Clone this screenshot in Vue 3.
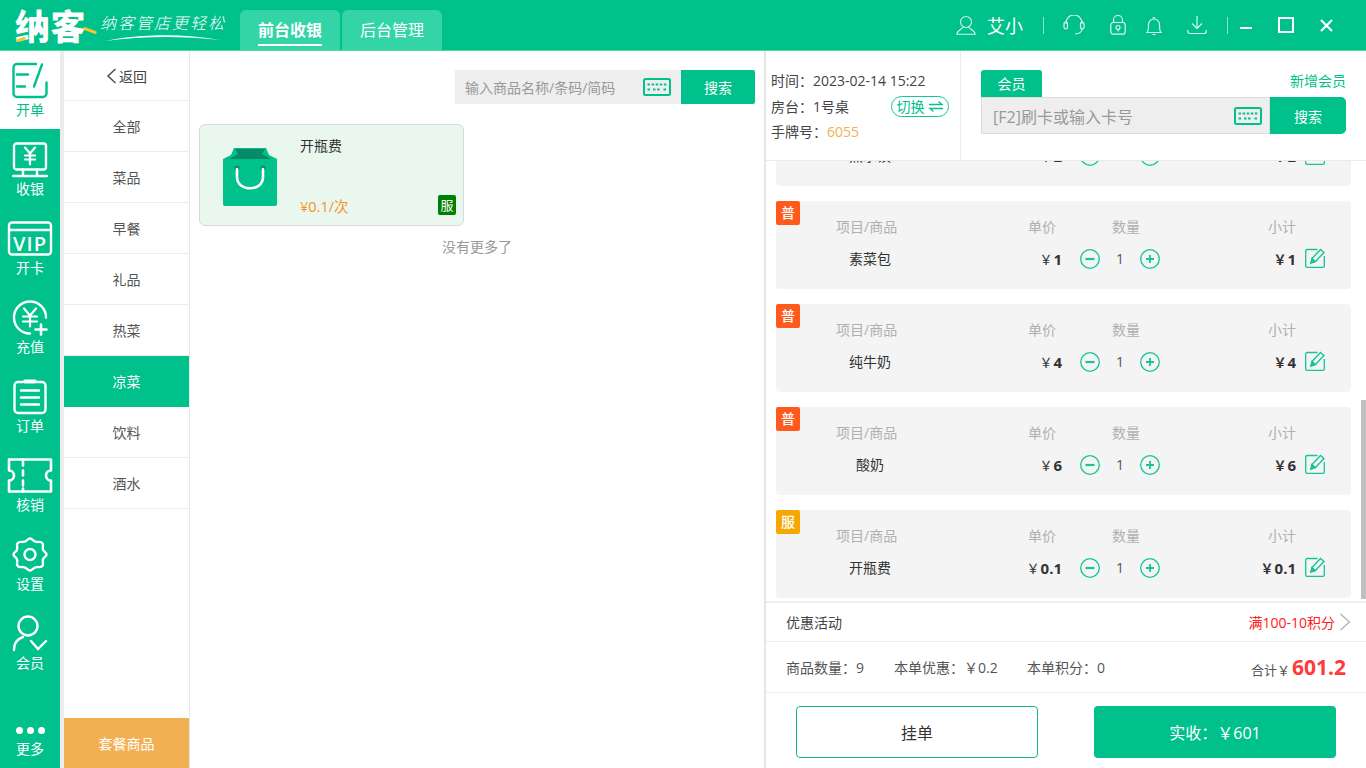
<script setup>
const cats = ['全部', '菜品', '早餐', '礼品', '热菜', '凉菜', '饮料', '酒水']
const cart = [
  { tag: '普', name: '蒸水饺', price: '2', kind: 'normal' },
  { tag: '普', name: '素菜包', price: '1', kind: 'normal' },
  { tag: '普', name: '纯牛奶', price: '4', kind: 'normal' },
  { tag: '普', name: '酸奶', price: '6', kind: 'normal' },
  { tag: '服', name: '开瓶费', price: '0.1', kind: 'service' }
]
</script>

<template>
  <div class="app">
    <header class="top">
      <div class="logo"><span class="logo-name">纳客</span><i class="acc a1"></i><i class="acc a2"></i></div>
      <div class="slogan">
        <span>纳客管店更轻松</span>
        <svg width="120" height="10" viewBox="0 0 120 10"><path d="M2 8C35 1 80 0 117 7C80 3 40 3 2 8Z" fill="#fff"/></svg>
      </div>
      <nav class="tabs">
        <div class="tab on"><span>前台收银</span></div>
        <div class="tab"><span>后台管理</span></div>
      </nav>
      <div class="tools">
        <svg class="t-user" width="20" height="20" viewBox="0 0 20 20" fill="none" stroke="#d6f7ea" stroke-width="1.1"><circle cx="10" cy="7" r="5.5"/><path d="M7.5 11.5C7 14 1 15 .8 19.3H19.2C19 15 13 14 12.5 11.5"/></svg>
        <span class="uname">艾小</span>
        <i class="sep s1"></i>
        <svg class="t-head" width="22" height="20" viewBox="0 0 22 20" fill="none" stroke="#d6f7ea" stroke-width="1.2"><path d="M3 9V8a8 8 0 0 1 16 0v1"/><rect x="1" y="7" width="3.5" height="7" rx="1.7"/><rect x="17.5" y="7" width="3.5" height="7" rx="1.7"/><path d="M19 14c0 3-3 5-7 5"/></svg>
        <svg class="t-lock" width="16" height="20" viewBox="0 0 16 20" fill="none" stroke="#d6f7ea" stroke-width="1.2"><rect x=".8" y="7.5" width="14.4" height="11.7" rx="2.5"/><path d="M3.5 7.5V5a4.5 4.5 0 0 1 9 0v2.5"/><circle cx="8" cy="12.5" r="2"/><path d="M8 14.5v2"/></svg>
        <svg class="t-bell" width="16" height="21" viewBox="0 0 16 21" fill="none" stroke="#d6f7ea" stroke-width="1.2"><path d="M1 17.5c1.5-1 1.5-3 1.5-8a5.5 5.5 0 0 1 11 0c0 5 0 7 1.5 8Z"/><path d="M6.5 19.5h3M7 3.5a1 1 0 0 1 2 0"/></svg>
        <svg class="t-down" width="20" height="20" viewBox="0 0 20 20" fill="none" stroke="#d6f7ea" stroke-width="1.2"><path d="M10 1v12M5 8.5l5 5 5-5"/><path d="M.8 15v1.5a2 2 0 0 0 2 2h14.4a2 2 0 0 0 2-2V15"/></svg>
        <i class="sep s2"></i>
        <i class="w-min"></i>
        <i class="w-max"></i>
        <svg class="w-close" width="13" height="13" viewBox="0 0 13 13" stroke="#fff" stroke-width="2.2"><path d="M1 1l11 11M12 1L1 12"/></svg>
      </div>
    </header>

    <div class="body">
      <aside class="side">
        <div class="nav on">
          <svg width="36" height="36" viewBox="0 0 36 36" fill="none" stroke="#00c18b" stroke-width="2.4" stroke-linecap="round"><path d="M24 1.5H5A3.5 3.5 0 0 0 1.5 5v26A3.5 3.5 0 0 0 5 34.5h26a3.5 3.5 0 0 0 3.5-3.5V20"/><path d="M30 2l-8 22M5 12h11M5 24h8"/></svg>
          <span>开单</span>
        </div>
        <div class="nav">
          <svg width="36" height="36" viewBox="0 0 36 36" fill="none" stroke="#fff" stroke-width="2.4" stroke-linecap="round"><rect x="2" y="2" width="32" height="26" rx="2.5"/><path d="M11 28v6M25 28v6M1 34.5h34"/><path d="M13 6l5 6 5-6M13 14h10M13 18h10M18 12v11" stroke-width="2.2"/></svg>
          <span>收银</span>
        </div>
        <div class="nav">
          <svg width="46" height="36" viewBox="0 0 46 36" fill="none" stroke="#fff" stroke-width="2.4"><rect x="2" y="2" width="42" height="32" rx="3"/><path d="M2 9.5h42"/><text x="23" y="30" text-anchor="middle" font-family="Open Sans, sans-serif" font-size="20" font-weight="600" fill="#fff" stroke="none" letter-spacing="1">VIP</text></svg>
          <span>开卡</span>
        </div>
        <div class="nav">
          <svg width="38" height="36" viewBox="0 0 38 36" fill="none" stroke="#fff" stroke-width="2.4" stroke-linecap="round"><path d="M19 34A16 16 0 1 1 35 18"/><path d="M13 9l6 7 6-7M12 17h14M12 22h14M19 16v11" stroke-width="2.2"/><path d="M30 25v10M24.5 30h11" stroke-width="2.6"/></svg>
          <span>充值</span>
        </div>
        <div class="nav">
          <svg width="36" height="36" viewBox="0 0 36 36" fill="none" stroke="#fff" stroke-width="2.4" stroke-linecap="round"><path d="M11 3.5H6A3.5 3.5 0 0 0 2.5 7v24A3.5 3.5 0 0 0 6 34.5h24a3.5 3.5 0 0 0 3.5-3.5V7A3.5 3.5 0 0 0 30 3.5h-5"/><path d="M13 3h10" stroke-width="4"/><path d="M9 12h18M9 19h18M9 26h18"/></svg>
          <span>订单</span>
        </div>
        <div class="nav">
          <svg width="46" height="36" viewBox="0 0 46 36" fill="none" stroke="#fff" stroke-width="2.6" stroke-linecap="round" stroke-linejoin="round"><path d="M2 2h42v11a5 5 0 0 0 0 10v11H2V23a5 5 0 0 0 0-10Z"/><path d="M16 2v6M16 13v5M16 23v5M16 31v3"/></svg>
          <span>核销</span>
        </div>
        <div class="nav">
          <svg width="36" height="36" viewBox="0 0 36 36" fill="none" stroke="#fff" stroke-width="2.4"><path d="M18 2c2.5 0 3 2.5 5.500 3.200 3 .8 5-.8 6.800 1.300 1.800 2-.2 4 .7 6.700.8 2.500 3.500 2.600 3.500 4.800s-2.700 2.300-3.500 4.800c-.9 2.700 1.100 4.700-.7 6.700-1.800 2.100-3.800.5-6.800 1.300C21 31.500 20.500 34 18 34s-3-2.500-5.500-3.200c-3-.8-5 .8-6.800-1.300-1.800-2 .2-4-.7-6.700C4.200 20.300 1.500 20.200 1.500 18s2.700-2.300 3.500-4.800c.9-2.700-1.100-4.700.7-6.700 1.800-2.100 3.800-.5 6.800-1.300C15 4.500 15.500 2 18 2Z"/><circle cx="18" cy="18" r="5.5"/></svg>
          <span>设置</span>
        </div>
        <div class="nav">
          <svg width="36" height="37" viewBox="0 0 36 37" fill="none" stroke="#fff" stroke-width="2.4" stroke-linecap="round"><circle cx="16" cy="11" r="9.5"/><path d="M2 35c0-7 3-11 9-13"/><path d="M19 26l7 8 8-8"/></svg>
          <span>会员</span>
        </div>
        <div class="nav more">
          <div class="dots"><i></i><i></i><i></i></div>
          <span>更多</span>
        </div>
      </aside>

      <aside class="cats">
        <div class="cat back">
          <svg width="11" height="16" viewBox="0 0 11 16" fill="none" stroke="#555" stroke-width="1.6"><path d="M9.5 1L2 8l7.5 7"/></svg>
          <span>返回</span>
        </div>
        <div v-for="c in cats" :key="c" class="cat" :class="{ on: c === '凉菜' }">{{ c }}</div>
        <div class="combo">套餐商品</div>
      </aside>

      <main class="goods">
        <div class="search">
          <div class="s-input">
            <span>输入商品名称/条码/简码</span>
            <svg width="28" height="18" viewBox="0 0 28 18" fill="none" stroke="#00c18b"><rect x="1" y="1" width="26" height="16" rx="1.5" stroke-width="2"/><path d="M4.5 6.5h19M4.5 11.5h3M10 11.5h8M20.5 11.5h3" stroke-width="2" stroke-dasharray="2.5 1.6"/></svg>
          </div>
          <button class="s-btn">搜索</button>
        </div>
        <div class="card">
          <svg class="bag" width="54" height="58" viewBox="0 0 54 58"><path d="M11 0h32l3 7 8 4v45a2 2 0 0 1-2 2H2a2 2 0 0 1-2-2V11l8-4Z" fill="#00c18b"/><path d="M12 1h30l-3 5 9 5H6l9-5Z" fill="#078a68"/><circle cx="14" cy="20" r="2.5" fill="#078a68"/><circle cx="40" cy="20" r="2.5" fill="#078a68"/><path d="M14 21v8c0 15 26 15 26 0v-8" fill="none" stroke="#fff" stroke-width="2.6" stroke-linecap="round"/></svg>
          <div class="c-text">
            <div class="c-name">开瓶费</div>
            <div class="c-price">¥0.1/次</div>
          </div>
          <span class="c-tag">服</span>
        </div>
        <div class="nomore">没有更多了</div>
      </main>

      <section class="order">
        <div class="o-top">
          <div class="info">
            <div class="line">时间：2023-02-14 15:22</div>
            <div class="line between">
              <span>房台：1号桌</span>
              <span class="pill">切换
                <svg width="16" height="11" viewBox="0 0 16 11" fill="none" stroke="#00c18b" stroke-width="1.3"><path d="M1 3.5h13L10.5 .5M15 7.5H2l3.5 3"/></svg>
              </span>
            </div>
            <div class="line">手牌号：<em>6055</em></div>
          </div>
          <div class="member">
            <div class="m-head">
              <span class="m-tab">会员</span>
              <span class="m-add">新增会员</span>
            </div>
            <div class="m-row">
              <div class="m-input">
                <span>[F2]刷卡或输入卡号</span>
                <svg width="28" height="18" viewBox="0 0 28 18" fill="none" stroke="#00c18b"><rect x="1" y="1" width="26" height="16" rx="1.5" stroke-width="2"/><path d="M4.5 6.5h19M4.5 11.5h3M10 11.5h8M20.5 11.5h3" stroke-width="2" stroke-dasharray="2.5 1.6"/></svg>
              </div>
              <button class="m-btn">搜索</button>
            </div>
          </div>
        </div>

        <div class="list">
          <div v-for="it in cart" :key="it.name" class="item">
            <span class="badge" :class="it.kind">{{ it.tag }}</span>
            <div class="grid head">
              <span class="g-name">项目/商品</span>
              <span class="g-price">单价</span>
              <span class="g-qty">数量</span>
              <span class="g-sub">小计</span>
            </div>
            <div class="grid row">
              <span class="r-name">{{ it.name }}</span>
              <span class="r-price"><small>￥</small><b>{{ it.price }}</b></span>
              <span class="r-qty">
                <svg width="20" height="20" viewBox="0 0 20 20" fill="none" stroke="#14c596"><circle cx="10" cy="10" r="9.3" stroke-width="1.3"/><path d="M5.5 10h9" stroke-width="2.2"/></svg>
                <span class="num">1</span>
                <svg width="20" height="20" viewBox="0 0 20 20" fill="none" stroke="#14c596"><circle cx="10" cy="10" r="9.3" stroke-width="1.3"/><path d="M6 10h8M10 6v8" stroke-width="1.8"/></svg>
              </span>
              <span class="r-sub"><b class="yen">￥</b><b>{{ it.price }}</b></span>
              <svg class="edit" width="20" height="20" viewBox="0 0 20 20" fill="none" stroke="#14c596" stroke-width="1.3"><path d="M12.5 1.5H2A1.3 1.3 0 0 0 .7 2.8V18A1.3 1.3 0 0 0 2 19.3h16a1.3 1.3 0 0 0 1.3-1.3V8"/><path d="M6 15l1-4.5L15.5 1.5l3.5 3-8.5 9Z" stroke-width="1.4"/><path d="M6 15l1-4.5 3.5 3Z" fill="#14c596"/></svg>
            </div>
          </div>
          <i class="bar"></i>
        </div>

        <div class="o-bottom">
          <div class="promo">
            <span>优惠活动</span>
            <span class="p-val">满100-10积分
              <svg width="12" height="18" viewBox="0 0 12 18" fill="none" stroke="#aaa" stroke-width="1.1"><path d="M1.5 1l9 8-9 8"/></svg>
            </span>
          </div>
          <div class="stats">
            <span class="st1">商品数量：9</span>
            <span class="st2">本单优惠：￥0.2</span>
            <span class="st3">本单积分：0</span>
            <span class="total"><small>合计￥</small><b>601.2</b></span>
          </div>
          <div class="actions">
            <button class="hold">挂单</button>
            <button class="pay">实收：￥601</button>
          </div>
        </div>
      </section>
    </div>
  </div>
</template>

<style>
html, body { margin: 0; overflow: hidden; background: #fff; }
</style>

<style scoped>
.app {
  width: 1366px; height: 768px; overflow: hidden; display: flex; flex-direction: column;
  font-family: "Open Sans", "Noto Sans CJK SC", sans-serif; font-size: 14px; color: #333; background: #fff;
}
button { font-family: inherit; border: 0; padding: 0; cursor: pointer; }
i { display: block; font-style: normal; }

.top { height: 50px; flex: none; display: flex; align-items: flex-end; background: #00c18b; border-bottom: 1px solid #4fdd94; }
.logo { position: relative; width: 85px; margin-left: 15px; height: 50px; flex: none; }
.logo-name { display: block; font-size: 35px; line-height: 54px; font-weight: 900; color: #fff; white-space: nowrap; letter-spacing: .5px; }
.acc { position: absolute; height: 3px; background: #f7c72f; transform: rotate(-18deg); border-radius: 2px; }
.a1 { left: 1px; top: 38px; width: 10px; }
.a2 { left: 68px; top: 29px; width: 14px; transform: rotate(20deg); }
.slogan { width: 140px; height: 50px; flex: none; display: flex; flex-direction: column; align-items: flex-start; padding-top: 13px; box-sizing: border-box; color: #fff; }
.slogan span { font-size: 16px; line-height: 20px; letter-spacing: 2px; font-style: italic; font-weight: 300; white-space: nowrap; }
.slogan svg { margin: 0 0 0 3px; }
.tabs { display: flex; gap: 2px; height: 40px; }
.tab { width: 100px; background: #33d4a6; border-radius: 6px 6px 0 0; color: #fff; font-size: 16px; display: flex; justify-content: center; padding-top: 8px; box-sizing: border-box; }
.tab span { height: 26px; line-height: 24px; }
.tab.on span { font-weight: 700; border-bottom: 2px solid #fff; }
.tools { flex: 1; height: 50px; display: flex; align-items: center; position: relative; }
.t-user { margin-left: 514px; }
.uname { margin-left: 11px; font-size: 18px; color: #fff; width: 36px; white-space: nowrap; }
.sep { width: 1px; height: 17px; background: #8fe3c8; }
.s1 { margin-left: 20px; }
.t-head { margin-left: 19px; }
.t-lock { margin-left: 25px; }
.t-bell { margin-left: 20px; }
.t-down { margin-left: 25px; }
.s2 { margin-left: 20px; }
.w-min { width: 12px; height: 2px; background: #fff; margin: 6px 0 0 12px; }
.w-max { width: 12px; height: 12px; border: 2px solid #fff; margin-left: 26px; }
.w-close { margin-left: 26px; }

.body { flex: 1; min-height: 0; display: flex; }
.side { width: 64px; flex: none; box-sizing: border-box; background: #00c18b; display: flex; flex-direction: column; border-right: 4px solid #ececec; }
.nav { height: 79px; flex: none; display: flex; flex-direction: column; align-items: center; justify-content: flex-start; padding-top: 12px; box-sizing: border-box; color: #fff; font-size: 14px; }
.nav svg { height: 37px; flex: none; }
.nav span { line-height: 18px; margin-top: 2px; }
.nav.on { background: #fff; color: #00c18b; height: 78px; padding-top: 11px; }
.more { margin-top: auto; height: 42px; padding-top: 0; }
.dots { display: flex; gap: 4px; height: 9px; align-items: center; margin-bottom: 5px; }
.dots i { width: 7px; height: 7px; border-radius: 50%; background: #fff; }
.more span { margin-top: 0; margin-bottom: 10px; }

.cats { width: 126px; flex: none; display: flex; flex-direction: column; border-right: 1px solid #e8e8e8; box-sizing: border-box; }
.cat { height: 51px; flex: none; display: flex; align-items: center; justify-content: center; border-bottom: 1px solid #ececec; box-sizing: border-box; font-size: 14px; color: #555; }
.back { height: 50px; gap: 2px; color: #444; }
.cat.on { background: #00c18b; color: #fff; border-bottom-color: #00c18b; }
.combo { margin-top: auto; height: 50px; flex: none; background: #f2b052; color: #fff; font-size: 14px; display: flex; align-items: center; justify-content: center; }

.goods { width: 574px; flex: none; box-sizing: border-box; padding: 19px 9px 0 9px; }
.search { display: flex; justify-content: flex-end; height: 34px; }
.s-input { width: 226px; background: #eee; display: flex; align-items: center; justify-content: space-between; padding: 0 10px; box-sizing: border-box; color: #999; font-size: 14px; white-space: nowrap; }
.s-btn { width: 74px; background: #00c18b; color: #fff; font-size: 14px; border-radius: 0 2px 2px 0; }
.card { position: relative; margin-top: 20px; width: 265px; height: 102px; box-sizing: border-box; border: 1px solid #d9d9d9; border-radius: 6px; background: #eaf7ef; display: flex; }
.bag { margin: 23px 0 0 23px; flex: none; }
.c-text { margin-left: 23px; padding: 11px 0 8px; display: flex; flex-direction: column; justify-content: space-between; }
.c-name { font-size: 14px; line-height: 20px; color: #333; }
.c-price { font-size: 14.5px; line-height: 20px; color: #f7931e; }
.c-tag { position: absolute; right: 7px; bottom: 10px; width: 18px; height: 20px; background: #008000; color: #fff; font-size: 13px; line-height: 20px; text-align: center; border-radius: 2px; }
.nomore { margin-top: 11px; text-align: center; color: #999; font-size: 14px; line-height: 20px; width: 556px; }

.order { width: 602px; flex: none; display: flex; flex-direction: column; border-left: 2px solid #e5e5e5; box-sizing: border-box; }
.o-top { height: 109px; flex: none; display: flex; position: relative; z-index: 2; background: #fff; border-bottom: 1px solid #eaeaea; box-sizing: content-box; }
.info { width: 195px; flex: none; box-sizing: border-box; padding: 17px 11px 0 5px; border-right: 1px solid #ececec; color: #444; font-size: 14px; }
.line { height: 25.5px; line-height: 25.5px; white-space: nowrap; }
.between { display: flex; justify-content: space-between; align-items: center; }
.line em { font-style: normal; color: #f2b052; font-size: 14px; }
.pill { display: flex; align-items: center; justify-content: center; gap: 3px; width: 58px; height: 21px; box-sizing: border-box; border: 1px solid #14c596; border-radius: 11px; color: #00c18b; font-size: 14px; }
.member { flex: 1; padding: 19px 20px 0 20px; }
.m-head { display: flex; justify-content: space-between; align-items: flex-end; height: 27px; }
.m-tab { width: 61px; height: 27px; line-height: 27px; text-align: center; color: #fff; background: #00c18b; border-radius: 3px 3px 0 0; font-size: 14px; }
.m-add { color: #00c18b; font-size: 14px; line-height: 22px; align-self: flex-start; }
.m-row { display: flex; height: 37px; }
.m-input { flex: 1; border: 1px solid #dcdcdc; background: #eee; display: flex; align-items: center; justify-content: space-between; padding: 0 7px 0 11px; box-sizing: border-box; color: #999; font-size: 16px; white-space: nowrap; }
.m-btn { width: 76px; background: #00c18b; color: #fff; font-size: 14px; border-radius: 0 5px 5px 0; }

.list { flex: 1; min-height: 0; overflow: hidden; position: relative; display: flex; flex-direction: column; justify-content: flex-end; gap: 15px; padding: 0 15px 3px 10px; }
.item { position: relative; flex: none; height: 88px; background: #f4f4f4; border-radius: 4px; box-sizing: border-box; padding: 16px 0 0 44px; }
.badge { position: absolute; left: 0; top: 0; width: 24px; height: 24px; line-height: 24px; text-align: center; color: #fff; font-size: 14px; border-radius: 2px; font-weight: 500; }
.badge.normal { background: #ff5a1c; }
.badge.service { background: #f5a800; }
.grid { display: grid; grid-template-columns: 100px 142px 116px 119px 28px; grid-template-rows: 20px; height: 20px; align-items: center; line-height: 20px; white-space: nowrap; }
.head { color: #b0b0b0; font-size: 14px; }
.g-name { margin-left: 16px; }
.g-price { justify-self: end; margin-right: 6px; }
.g-qty { margin-left: 50px; }
.g-sub { justify-self: end; margin-right: 1px; }
.row { margin-top: 12px; }
.r-name { text-align: center; font-size: 14px; color: #333; }
.r-price { justify-self: end; display: flex; align-items: center; }
.r-price small { font-size: 13px; width: 13px; text-align: center; }
.r-price b, .r-sub b { font-weight: 700; font-size: 15px; margin-left: 1px; }
.r-qty { display: flex; align-items: center; margin-left: 18px; }
.num { width: 40px; text-align: center; color: #555; }
.r-sub { justify-self: end; display: flex; align-items: center; margin-right: 1px; }
.r-sub .yen { font-size: 13px; width: 13px; text-align: center; margin: 0; }
.edit { justify-self: end; margin-bottom: 3px; }
.bar { position: absolute; right: 0; top: 239px; width: 5px; height: 199px; background: #c0c0c0; }

.o-bottom { flex: none; border-top: 2px solid #eee; }
.promo { height: 39px; box-sizing: border-box; border-bottom: 1px solid #ececec; display: flex; align-items: center; justify-content: space-between; padding: 0 15px 0 20px; font-size: 14px; color: #444; }
.p-val { display: flex; align-items: center; gap: 4px; color: #ff2020; font-size: 14px; }
.stats { height: 51px; box-sizing: border-box; border-bottom: 1px solid #ececec; display: flex; align-items: center; padding: 0 20px; font-size: 14px; color: #555; white-space: nowrap; }
.st1 { width: 108px; }
.st2 { width: 133px; }
.total { margin-left: auto; display: flex; align-items: baseline; color: #555; }
.total small { font-size: 13px; }
.total b { font-size: 21px; line-height: 26px; color: #ff3b3b; margin-left: 2px; }
.actions { height: 75px; display: flex; justify-content: space-between; padding: 13px 30px 10px; box-sizing: border-box; }
.actions button { width: 242px; height: 52px; border-radius: 4px; font-size: 16px; }
.hold { background: #fff; border: 1px solid #14b88a; color: #333; box-sizing: border-box; }
.pay { background: #00c18b; color: #fff; }
</style>
